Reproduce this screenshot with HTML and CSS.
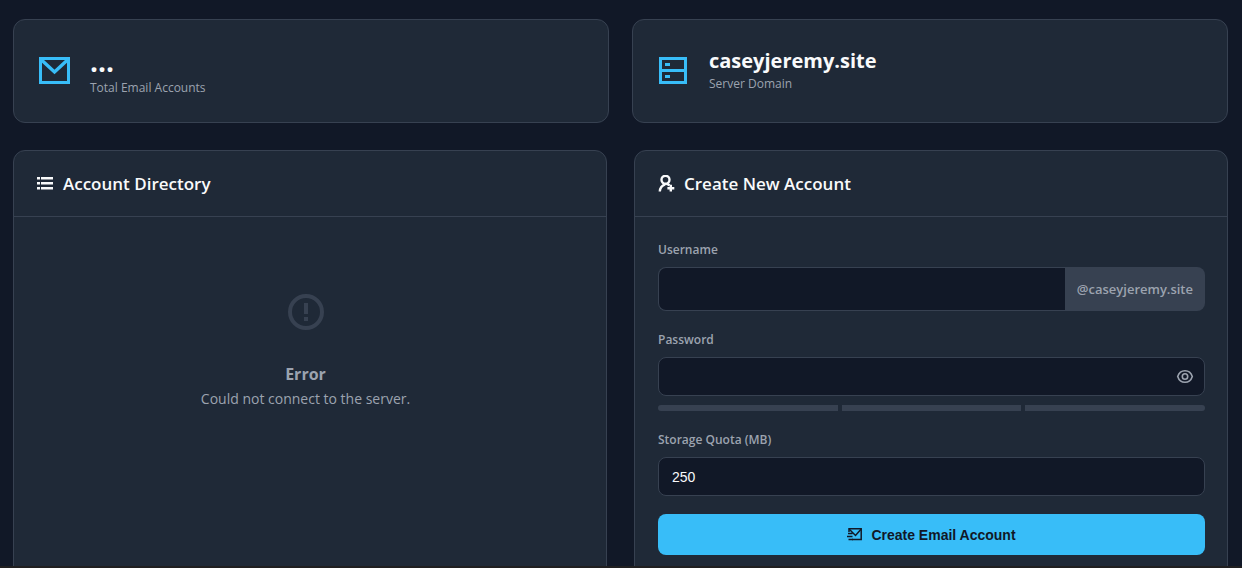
FILE: index.html
```html
<!DOCTYPE html>
<html lang="en">
<head>
<meta charset="utf-8">
<meta name="viewport" content="width=device-width, initial-scale=1">
<title>Email Accounts</title>
<link rel="stylesheet" href="styles.css">
</head>
<body>
<main class="page">
  <section class="stats">
    <div class="card stat">
      <svg class="stat-icon" viewBox="0 0 32 32" fill="none" stroke="currentColor" stroke-width="3" aria-hidden="true">
        <rect x="2.5" y="3.5" width="28" height="24"/>
        <path d="M3 4.500l13.500 12.500L30 4.500" stroke-width="3.400"/>
      </svg>
      <div class="stat-text">
        <div class="stat-value stat-value-loading">...</div>
        <div class="stat-label">Total Email Accounts</div>
      </div>
    </div>
    <div class="card stat">
      <svg class="stat-icon" viewBox="0 0 32 32" fill="none" stroke="currentColor" stroke-width="3" aria-hidden="true">
        <path d="M3.500 3.500h25v24h-25zM3.500 15.500h25"/>
        <path d="M8 9.500h5M8 21.500h5"/>
      </svg>
      <div class="stat-text">
        <div class="stat-value">caseyjeremy.site</div>
        <div class="stat-label">Server Domain</div>
      </div>
    </div>
  </section>

  <section class="panels">
    <div class="card panel">
      <header class="panel-header">
        <svg class="panel-icon" viewBox="0 0 18 18" fill="currentColor" aria-hidden="true">
          <path d="M0 2h3v2.600H0zM4 2h12v2.600H4zM0 7h3v2.600H0zM4 7h12v2.600H4zM0 12h3v2.600H0zM4 12h12v2.600H4z"/>
        </svg>
        <h2 class="panel-title">Account Directory</h2>
      </header>
      <div class="empty">
        <svg class="empty-icon" viewBox="0 0 44 44" fill="none" stroke="currentColor" stroke-width="4" aria-hidden="true">
          <circle cx="22" cy="22" r="16"/>
          <path d="M22 13v11M22 27v4"/>
        </svg>
        <h3 class="empty-title">Error</h3>
        <p class="empty-text">Could not connect to the server.</p>
      </div>
    </div>

    <div class="card panel">
      <header class="panel-header">
        <svg class="panel-icon" viewBox="0 0 18 18" fill="none" stroke="currentColor" stroke-width="2.400" aria-hidden="true">
          <circle cx="7.500" cy="4.800" r="4"/>
          <path d="M1.800 16.500c.2-3.500 2.200-6.200 5.400-7.200M8.500 8.800c1.300.3 2.200.8 3 1.600M12.800 9.800v6.700M9.400 13.200h6.900"/>
        </svg>
        <h2 class="panel-title">Create New Account</h2>
      </header>
      <form class="form">
        <div class="field">
          <label class="label" for="username">Username</label>
          <div class="input-group">
            <input class="input" id="username" type="text">
            <span class="suffix">@caseyjeremy.site</span>
          </div>
        </div>
        <div class="field">
          <label class="label" for="password">Password</label>
          <div class="password">
            <input class="input" id="password" type="password">
            <button class="reveal" type="button" aria-label="Show password">
              <svg class="reveal-icon" viewBox="0 0 18 18" fill="none" stroke="currentColor" stroke-width="1.600" aria-hidden="true">
                <path d="M1.700 8.500C3 4.500 5.600 2.700 9 2.700S15 4.500 16.300 8.500C15 12.500 12.400 14.300 9 14.300S3 12.500 1.700 8.500z"/>
                <circle cx="9" cy="8.500" r="2.700"/>
              </svg>
            </button>
          </div>
          <div class="strength"><span class="bar"></span><span class="bar"></span><span class="bar"></span></div>
        </div>
        <div class="field">
          <label class="label" for="quota">Storage Quota (MB)</label>
          <input class="input" id="quota" type="text" inputmode="numeric" value="250">
        </div>
        <button class="submit" type="submit">
          <svg class="submit-icon" viewBox="0 0 16 16" fill="none" stroke="currentColor" stroke-width="1.500" aria-hidden="true">
            <path d="M2 5V1.800h12.200v10.700H5"/>
            <path d="M2.300 2.200L8.500 8.500L14 2.200M1 6.500h4.500M0 9.500h5.500M1.500 12.500H6"/>
          </svg>
          Create Email Account
        </button>
      </form>
    </div>
  </section>
</main>
</body>
</html>
```
FILE: styles.css
```css
* { box-sizing: border-box; }

body {
  margin: 0;
  background: #111827;
  color: #f9fafb;
  font-family: "Open Sans", "Noto Sans", sans-serif;
}

h2, h3, p { margin: 0; }

svg { display: block; flex: none; }

.page {
  display: flex;
  flex-direction: column;
  gap: 27px;
  height: 100vh;
  padding: 19px 14px 0 13px;
  overflow: hidden;
  border-bottom: 2px solid #201f20;
}

.card {
  background: #1f2937;
  border: 1px solid #374151;
  border-radius: 12px;
}

.stats {
  display: grid;
  grid-template-columns: 1fr 1fr;
  gap: 23px;
}

.stat {
  display: flex;
  align-items: center;
  gap: 20px;
  min-height: 104px;
  padding: 24px;
}

.stat-icon { width: 32px; height: 32px; color: #38bdf8; }

.stat-value { font-size: 20px; line-height: 26px; font-weight: 700; }

.stat-value-loading { font-size: 28px; line-height: 34px; }

.stat-label { font-size: 12px; line-height: 20px; color: #9ca3af; }

.panels {
  display: grid;
  grid-template-columns: 1fr 1fr;
  gap: 27px;
}

.panel { min-height: 460px; }

.panel-header {
  display: flex;
  align-items: center;
  gap: 8px;
  padding: 20px 23px;
  border-bottom: 1px solid #374151;
}

.panel-icon { width: 18px; height: 18px; }

.panel-title { font-size: 17px; line-height: 25px; font-weight: 600; }

.empty {
  display: flex;
  flex-direction: column;
  align-items: center;
  padding: 73px 9px 0 0;
  color: #9ca3af;
}

.empty-icon { width: 44px; height: 44px; margin-bottom: 28px; color: #374151; }

.empty-title { font-size: 16px; line-height: 24px; font-weight: 700; }

.empty-text { font-size: 14px; line-height: 26px; }

.form { padding: 22px 22px 24px 23px; }

.field { margin-bottom: 18px; }

.label {
  display: block;
  margin-bottom: 6px;
  color: #9ca3af;
  font-size: 12px;
  line-height: 22px;
  font-weight: 600;
}

.input {
  display: block;
  width: 100%;
  height: 39px;
  padding: 0 13px;
  background: #111827;
  border: 1px solid #374151;
  border-radius: 8px;
  color: #f9fafb;
  font: 14px "Liberation Sans", Arial, sans-serif;
}

.input-group { display: flex; height: 44px; }

.input-group .input {
  flex: 1;
  min-width: 0;
  height: 100%;
  border-right: 0;
  border-radius: 8px 0 0 8px;
}

.suffix {
  display: flex;
  align-items: center;
  padding: 0 12px;
  background: #374151;
  border-radius: 0 8px 8px 0;
  color: #9ca3af;
  font-size: 13px;
  font-weight: 600;
}

.password { position: relative; }

.reveal {
  position: absolute;
  top: 0;
  right: 0;
  display: grid;
  place-items: center;
  width: 40px;
  height: 100%;
  padding: 0;
  background: none;
  border: 0;
  color: #9ca3af;
}

.reveal-icon { width: 18px; height: 18px; }

.strength {
  display: flex;
  gap: 4px;
  height: 6px;
  margin-top: 9px;
  border-radius: 3px;
  overflow: hidden;
}

.bar { flex: 1; background: #374151; }

.submit {
  display: flex;
  align-items: center;
  justify-content: center;
  gap: 8px;
  width: 100%;
  height: 41px;
  background: #38bdf8;
  border: 0;
  border-radius: 8px;
  color: #111827;
  font: 700 14px "Liberation Sans", Arial, sans-serif;
}

.submit-icon { width: 16px; height: 16px; }
```
